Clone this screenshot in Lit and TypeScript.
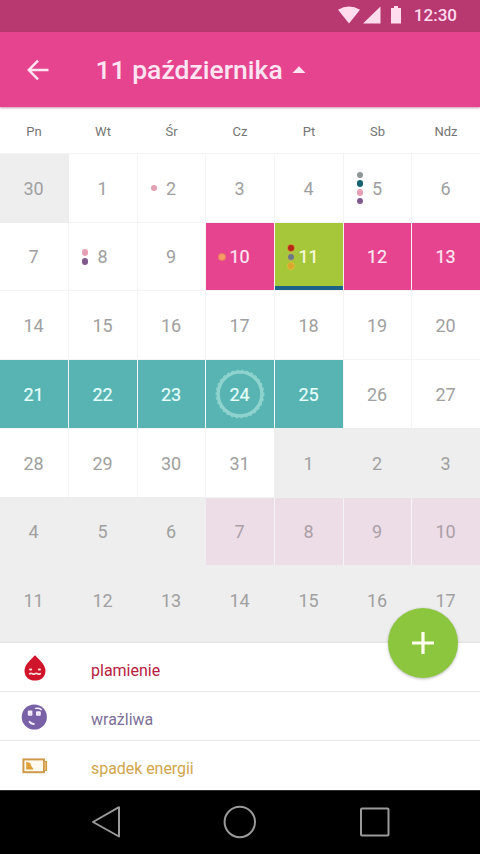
import { LitElement, html, css, svg, nothing } from "lit";
import { customElement } from "lit/decorators.js";
import { classMap } from "lit/directives/class-map.js";

type Kind = "plain" | "out" | "period" | "today" | "fertile" | "forecast";

interface Day {
  n: number;
  kind: Kind;
  dots: string[];
  ring: boolean;
}

const WEEKDAYS = ["Pn", "Wt", "Śr", "Cz", "Pt", "Sb", "Ndz"];

const DOTS: Record<number, string[]> = {
  2: ["pink"],
  5: ["grey", "teal", "pink", "purple"],
  8: ["pink", "purple"],
  10: ["orange"],
  11: ["red", "slate", "amber"],
};

const kindOf = (d: number): Kind => {
  if (d === 11) return "today";
  if (d >= 10 && d <= 13) return "period";
  if (d >= 21 && d <= 25) return "fertile";
  return "plain";
};

const DAYS: Day[] = [
  { n: 30, kind: "out", dots: [], ring: false },
  ...Array.from({ length: 31 }, (_, i): Day => ({
    n: i + 1,
    kind: kindOf(i + 1),
    dots: DOTS[i + 1] ?? [],
    ring: i + 1 === 24,
  })),
  ...Array.from({ length: 17 }, (_, i): Day => ({
    n: i + 1,
    kind: i + 1 >= 7 && i + 1 <= 10 ? "forecast" : "out",
    dots: [],
    ring: false,
  })),
];

const ring = svg`
  <circle cx="25" cy="25" r="21.9" fill="none" stroke="#8ed3ce" stroke-width="3.4" />
  <circle cx="25" cy="25" r="23.8" fill="none" stroke="#8ed3ce" stroke-width="1.2" stroke-dasharray="2.3 2.6" />`;

@customElement("status-bar")
class StatusBar extends LitElement {
  static styles = css`
    :host {
      display: flex;
      justify-content: flex-end;
      align-items: center;
      height: 32px;
      box-sizing: border-box;
      padding: 0 23px 2px 0;
      background: #b83870;
      color: #ffdcee;
      font: 500 17px/30px Roboto, sans-serif;
    }
    svg { display: block; margin-right: 9.5px; }
  `;
  render() {
    return html`
      <svg width="67" height="20" viewBox="0 0 67 20" fill="#ffdcee">
        <path d="M1 4.8Q12 -1.8 23 4.8L12 18.5Z" />
        <path d="M43.5 1.5V18.5H26Z" />
        <path d="M54 3h3V1h4v2h3v15.5H54Z" />
      </svg>
      <span>12:30</span>`;
  }
}

@customElement("month-grid")
class MonthGrid extends LitElement {
  static styles = css`
    :host {
      display: block;
      font-family: Roboto, sans-serif;
    }
    .names, .grid {
      display: grid;
      grid-template-columns: 68px 68px 67px 68px 68px 67px 68px;
      column-gap: 1px;
    }
    .names {
      height: 47px;
      align-items: center;
      text-align: center;
      font-size: 13px;
      color: #757575;
      background: #fff;
      padding-top: 2px;
      box-sizing: border-box;
      border-bottom: 1px solid #f4f4f4;
    }
    .grid {
      grid-template-rows: 68px 67px 68px 68px 68px 67px 77px;
      row-gap: 1px;
      height: 489px;
      box-sizing: border-box;
      overflow: hidden;
      background: #f4f4f4;
    }
    .day {
      position: relative;
      display: flex;
      align-items: center;
      justify-content: center;
      background: #fff;
      color: #a0a0a0;
      font-size: 18px;
      box-sizing: border-box;
      padding: 0 1px 0 0;
    }
    .out { background: #eeeeee; box-shadow: 0 0 0 1px #eeeeee; }
    .out:nth-child(n + 43) { padding-bottom: 9px; }
    .period { background: #e6448f; color: #ffe9f4; }
    .today { background: #a6c73a; color: #fbffe0; border-bottom: 4px solid #1b6286; padding-top: 4px; }
    .fertile { background: #57b4b2; color: #e6fffc; }
    .forecast { background: #eddde6; color: #aa9fa6; }
    .period, .today, .fertile { -webkit-text-stroke: 0.2px currentColor; }
    .ring { position: absolute; left: 9px; top: 9px; }
    .n { position: relative; }
    .dots {
      position: absolute;
      left: 13px;
      top: 0;
      height: 68px;
      display: flex;
      flex-direction: column;
      justify-content: center;
      gap: 2.7px;
    }
    .dot { width: 6.2px; height: 6.2px; border-radius: 50%; }
    .pink { background: #e5a0b4; }
    .grey { background: #8d9596; }
    .teal { background: #176272; }
    .purple { background: #80598d; }
    .orange { background: #f69b65; box-shadow: 0 0 0 1px #e87b62; }
    .red { background: #b42818; box-shadow: 0 0 0 0.7px #dc7a35; }
    .slate { background: #6b7a88; box-shadow: 0 0 0 0.7px #c4b052; }
    .amber { background: #d9a72e; box-shadow: 0 0 0 0.7px #edbb34; }
  `;
  render() {
    return html`
      <div class="names">${WEEKDAYS.map((w) => html`<span>${w}</span>`)}</div>
      <div class="grid">
        ${DAYS.map(
          (d) => html`<div class=${classMap({ day: true, [d.kind]: true })}>
            ${d.dots.length
              ? html`<div class="dots">${d.dots.map((c) => html`<i class=${classMap({ dot: true, [c]: true })}></i>`)}</div>`
              : nothing}
            ${d.ring ? html`<svg class="ring" width="50" height="50" viewBox="0 0 50 50">${ring}</svg>` : nothing}
            <span class="n">${d.n}</span>
          </div>`
        )}
      </div>`;
  }
}

@customElement("symptom-list")
class SymptomList extends LitElement {
  static styles = css`
    :host {
      display: block;
      height: 147px;
      background: #fff;
      font: 16px/20px Roboto, sans-serif;
      box-shadow: 0 -1px 2px rgba(0, 0, 0, 0.05);
      position: relative;
    }
    .row {
      height: 49px;
      box-sizing: border-box;
      display: flex;
      align-items: center;
      padding: 8px 0 0 21px;
      border-bottom: 1px solid #e9e9e9;
    }
    .row:last-child { border-bottom: none; padding-top: 6px; }
    svg { display: block; margin: -6px 42px 0 0; }
    .red { color: #b8203e; }
    .violet { color: #7c7099; }
    .gold { color: #d0a54c; }
    .gold svg { margin-top: -5px; }
    .gold span { letter-spacing: -0.05px; }
  `;
  render() {
    return html`
      <div class="row red">
        <svg width="28" height="28" viewBox="0 0 28 28">
          <path d="M14 1.2C17 4.5 24.8 10.6 24.5 17C24.2 23.4 19.8 26.6 14 26.6S3.8 23.4 3.5 17C3.2 10.6 11 4.5 14 1.2Z" fill="#d0142a" />
          <g fill="none" stroke="#ffdcd8" stroke-linecap="round">
            <path d="M9 15.4h1.2M17.8 15.4h1.2" stroke-width="2" />
            <path d="M8.8 19.8q1.3-.8 2.6 0t2.6 0 2.6 0 2.6 0" stroke-width="1.8" />
          </g>
        </svg>
        <span>plamienie</span>
      </div>
      <div class="row violet">
        <svg width="28" height="28" viewBox="0 0 28 28">
          <circle cx="13.3" cy="14" r="12.6" fill="#7861a7" />
          <g fill="#f3edff">
            <rect x="6.8" y="7.6" width="4.6" height="5.2" rx="1" />
            <rect x="15" y="8.2" width="4.8" height="4.6" rx="1" />
          </g>
          <g fill="none" stroke="#f3edff" stroke-linecap="round">
            <path d="M14.6 5.4Q18 4.8 20.4 6.6" stroke-width="1.4" />
            <path d="M8.6 18.8q1.7 2.2 4.2 2.2" stroke-width="2" />
          </g>
          <path d="M8.8 10.6h.9v.9h-.9zM17 10.6h.9v.9H17z" fill="#c6bbdd" />
        </svg>
        <span>wrażliwa</span>
      </div>
      <div class="row gold">
        <svg width="28" height="28" viewBox="0 0 28 28">
          <rect x="2.4" y="7.4" width="20.6" height="12.8" fill="#fffaf0" stroke="#cf9a48" stroke-width="2" />
          <path d="M23.5 9.5h2v9h-2" fill="#e8bd76" stroke="#cf9a48" stroke-width="1.2" />
          <path d="M5.2 9.8l4 1.2 1 2.8 2.4 3.6H5.2Z" fill="#dfa03a" />
        </svg>
        <span>spadek energii</span>
      </div>`;
  }
}

@customElement("nav-bar")
class NavBar extends LitElement {
  static styles = css`
    :host {
      display: flex;
      height: 64px;
      background: #000;
      box-sizing: border-box;
      border-top: 1px solid #303030;
      justify-content: space-between;
      align-items: center;
      padding: 0 88.5px 2px 89px;
    }
    svg { display: block; fill: none; stroke: #9a9a9a; stroke-width: 2; stroke-linejoin: round; }
  `;
  render() {
    return html`
      <svg width="34" height="34" viewBox="0 0 34 34"><path d="M30 2.2V31.5L4 17Z" /></svg>
      <svg width="34" height="34" viewBox="0 0 34 34"><circle cx="16.8" cy="17" r="15.2" /></svg>
      <svg width="34" height="34" viewBox="0 0 34 34"><rect x="3" y="3.5" width="27.5" height="27" rx="1" /></svg>`;
  }
}

@customElement("app-root")
class AppRoot extends LitElement {
  static styles = css`
    :host {
      display: flex;
      flex-direction: column;
      position: relative;
      width: 480px;
      height: 854px;
      overflow: hidden;
      background: #fff;
    }
    .bar {
      height: 75px;
      box-sizing: border-box;
      display: flex;
      align-items: center;
      padding: 1px 0 0 26px;
      background: #e6448f;
      color: #ffe4f2;
      font: 500 26.5px/32px Roboto, sans-serif;
      position: relative;
      box-shadow: 0 1px 2px rgba(150, 20, 80, 0.45);
      z-index: 1;
    }
    .back { display: block; margin: -1px 45.5px 0 0; }
    .caret { display: block; margin: -2px 0 0 9px; }
    .fab {
      position: absolute;
      left: 388px;
      top: 608px;
      width: 70px;
      height: 70px;
      border-radius: 50%;
      background: #8cc63e;
      box-shadow: 0 1px 3px rgba(0, 0, 0, 0.28);
      border: none;
      padding: 0;
      display: grid;
      place-items: center;
    }
    .fab svg { display: block; }
  `;
  render() {
    return html`
      <status-bar></status-bar>
      <header class="bar">
        <svg class="back" width="24" height="24" viewBox="0 0 24 24" fill="none" stroke="#ffe4f2" stroke-width="2.5">
          <path d="M22.5 12H3M12 2.6L2.8 12L12 21.4" />
        </svg>
        <span>11 października</span>
        <svg class="caret" width="14" height="7" viewBox="0 0 14 7"><path d="M0.5 7L7 0.3L13.5 7Z" fill="#ffe4f2" /></svg>
      </header>
      <month-grid></month-grid>
      <symptom-list></symptom-list>
      <nav-bar></nav-bar>
      <button class="fab" aria-label="Dodaj">
        <svg width="24" height="24" viewBox="0 0 24 24"><path d="M12 1V23M1 12H23" stroke="#fffff0" stroke-width="3.2" /></svg>
      </button>`;
  }
}
